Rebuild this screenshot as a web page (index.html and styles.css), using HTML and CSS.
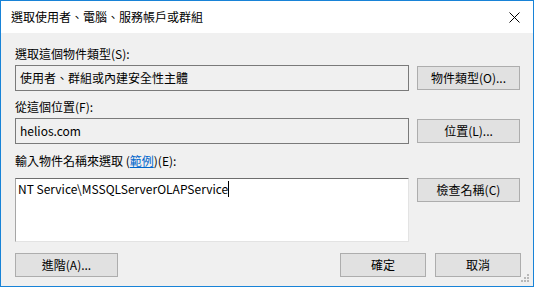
FILE: index.html
```html
<!DOCTYPE html>
<html lang="zh-Hant">
<head>
    <meta charset="UTF-8">
    <link rel="stylesheet" href="styles.css">
    <title>選取使用者、電腦、服務帳戶或群組</title>
</head>
<body>
    <div class="dialog">
        <div class="titlebar">
            <span class="title">選取使用者、電腦、服務帳戶或群組</span>
            <span class="close">
                <svg width="11" height="11" viewBox="0 0 11 11">
                    <path d="M0.5 0.5 L10.5 10.5 M10.5 0.5 L0.5 10.5" stroke="#000" stroke-width="1" fill="none"/>
                </svg>
            </span>
        </div>

        <div class="content">
            <div class="label first">選取這個物件類型(S):</div>
            <div class="row">
                <div class="field">使用者、群組或內建安全性主體</div>
                <button class="btn">物件類型(O)...</button>
            </div>

            <div class="label">從這個位置(F):</div>
            <div class="row">
                <div class="field">helios.com</div>
                <button class="btn">位置(L)...</button>
            </div>

            <div class="label third">輸入物件名稱來選取 (<a href="#">範例</a>)(E):</div>
            <div class="row top">
                <div class="names">NT Service\MSSQLServerOLAPService<span class="caret"></span></div>
                <button class="btn">檢查名稱(C)</button>
            </div>

            <div class="footer">
                <button class="btn wide">進階(A)...</button>
                <div class="actions">
                    <button class="btn ok">確定</button>
                    <button class="btn ok">取消</button>
                </div>
            </div>
        </div>

        <svg class="grip" width="9" height="9" viewBox="0 0 9 9">
            <rect x="6" y="0" width="2" height="2" fill="#b8b8b8"/>
            <rect x="3" y="3" width="2" height="2" fill="#b8b8b8"/>
            <rect x="6" y="3" width="2" height="2" fill="#b8b8b8"/>
            <rect x="0" y="6" width="2" height="2" fill="#b8b8b8"/>
            <rect x="3" y="6" width="2" height="2" fill="#b8b8b8"/>
            <rect x="6" y="6" width="2" height="2" fill="#b8b8b8"/>
        </svg>
    </div>
</body>
</html>
```

FILE: styles.css
```css
body {
    margin: 0;
    padding: 0;
    background-color: #fff;
    font-family: "Noto Sans CJK TC", "Noto Sans", sans-serif;
    font-size: 12px;
    color: #000;
}

.dialog {
    position: relative;
    width: 532px;
    height: 285px;
    border: 1px solid #1883d7;
    background-color: #f0f0f0;
    display: flex;
    flex-direction: column;
}

.titlebar {
    height: 32px;
    background-color: #fff;
    display: flex;
    align-items: center;
    justify-content: space-between;
    padding: 0 0 0 10px;
}

.title {
    font-size: 12px;
    line-height: 16px;
}

.close {
    width: 38px;
    height: 32px;
    display: flex;
    align-items: center;
    justify-content: center;
}

.content {
    padding: 12px 12px 0 14px;
    display: flex;
    flex-direction: column;
}

.label {
    line-height: 16px;
    height: 16px;
    margin-bottom: 3px;
}

.label.first {
    margin-top: 1px;
}

.row + .label {
    margin-top: 8px;
}

.row + .label.third {
    margin-top: 9px;
    margin-bottom: 9px;
}

.label a {
    color: #0066cc;
    text-decoration: underline;
}

.row {
    display: flex;
    align-items: center;
    gap: 8px;
}

.row.top {
    align-items: flex-start;
}

.field {
    box-sizing: border-box;
    width: 394px;
    height: 26px;
    border: 1px solid #7a7a7a;
    background-color: #f0f0f0;
    padding: 0 4px;
    line-height: 23px;
    white-space: nowrap;
}

.names {
    box-sizing: border-box;
    width: 394px;
    height: 64px;
    background-color: #fff;
    border-top: 1px solid #6d6d6d;
    border-left: 1px solid #a6a6a6;
    border-right: 1px solid #e3e3e3;
    border-bottom: 1px solid #e3e3e3;
    padding: 1px 2px;
    line-height: 18px;
    white-space: nowrap;
}

.caret {
    display: inline-block;
    width: 1px;
    height: 16px;
    background-color: #000;
    vertical-align: -3px;
}

.btn {
    box-sizing: border-box;
    width: 103px;
    height: 24px;
    border: 1px solid #adadad;
    background-color: #e1e1e1;
    font-family: inherit;
    font-size: 12px;
    color: #000;
    padding: 0;
    line-height: 20px;
}

.footer {
    margin-top: 11px;
    display: flex;
    justify-content: space-between;
}

.actions {
    display: flex;
    gap: 9px;
}

.btn.ok {
    width: 86px;
}

.grip {
    position: absolute;
    right: 3px;
    bottom: 3px;
}
```
